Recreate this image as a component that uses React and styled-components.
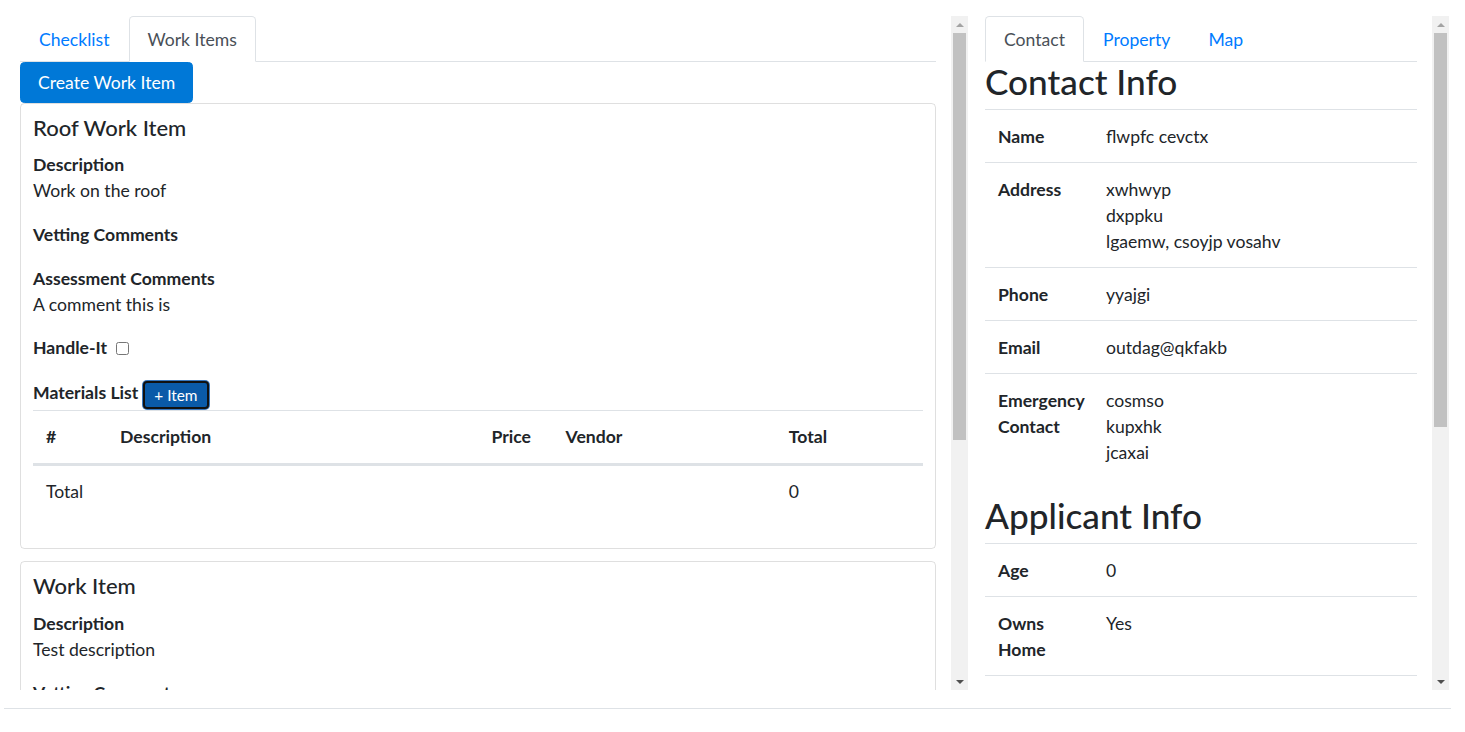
import React from "react";
import styled, { createGlobalStyle, css } from "styled-components";

const GlobalStyle = createGlobalStyle`
  html, body {
    margin: 0;
    padding: 0;
    background: #fff;
  }
  body {
    font-family: "Segoe UI", Lato, "Liberation Sans", sans-serif;
    font-size: 17.6px;
    line-height: 26px;
    color: #212529;
  }
  * {
    box-sizing: border-box;
  }
`;

const Page = styled.div`
  width: 1465px;
  padding: 16px 0 0 5px;
`;

const Columns = styled.div`
  display: flex;
  gap: 2px;
`;

const Pane = styled.div`
  display: flex;
  width: ${(p) => p.width}px;
  height: 674px;
`;

const PaneBody = styled.div`
  flex: 1;
  min-width: 0;
  padding: 0 15px;
  overflow: hidden;
`;

const ScrollTrack = styled.div`
  width: 17px;
  flex-shrink: 0;
  display: flex;
  flex-direction: column;
  background: #f1f1f1;
`;

const ScrollArrow = styled.div`
  height: 17px;
  display: flex;
  align-items: center;
  justify-content: center;

  &::before {
    content: "";
    border-left: 4px solid transparent;
    border-right: 4px solid transparent;
    ${(p) =>
      p.down
        ? css`
            border-top: 4px solid #505050;
          `
        : css`
            border-bottom: 4px solid #a3a3a3;
          `}
  }
`;

const ScrollThumb = styled.div`
  height: ${(p) => p.size}px;
  margin: 0 2px;
  background: #c1c1c1;
`;

const ScrollRest = styled.div`
  flex: 1;
`;

const Footer = styled.div`
  width: 1447px;
  margin: 18px 0 0 -1px;
  border-top: 1px solid #dee2e6;
`;

const NavTabs = styled.ul`
  display: flex;
  list-style: none;
  margin: 0;
  padding: 0;
  border-bottom: 1px solid #dee2e6;
`;

const Tab = styled.li`
  margin-bottom: -1px;
  padding: 10px 18px 8px;
  border: 1px solid transparent;
  border-radius: 4.4px 4.4px 0 0;
  color: #007bff;
  cursor: pointer;

  ${(p) =>
    p.active &&
    css`
      color: #495057;
      background: #fff;
      border-color: #dee2e6 #dee2e6 #fff;
    `}
`;

const PrimaryButton = styled.button`
  display: block;
  padding: 7px 17px 6px;
  font: inherit;
  color: #fff;
  background: #0078d7;
  border: 1px solid #0078d7;
  border-radius: 4.4px;
`;

const Card = styled.div`
  margin-bottom: 12px;
  padding: 11px 12px 13px;
  border: 1px solid rgba(0, 0, 0, 0.125);
  border-radius: 4.4px;
`;

const CardTitle = styled.h5`
  margin: 0 0 11px;
  font-size: 22px;
  font-weight: 500;
  line-height: 1.2;
`;

const Field = styled.div`
  margin-bottom: 17.6px;
`;

const Label = styled.div`
  font-weight: 700;
`;

const InlineLabel = styled.span`
  font-weight: 700;
`;

const Check = styled.input`
  width: 13px;
  height: 13px;
  margin: 0 0 0 9px;
  vertical-align: -1px;
`;

const MaterialsHeader = styled.div`
  display: flex;
  align-items: flex-start;
  height: 31px;
`;

const MaterialsLabel = styled.span`
  margin-top: 1px;
  font-weight: 700;
`;

const SmallButton = styled.button`
  height: 28px;
  margin: 2px 0 0 5px;
  padding: 0 9px;
  font: inherit;
  font-size: 15.4px;
  line-height: 22px;
  color: #fff;
  background: #0a5aa8;
  border: 2px solid #111;
  border-radius: 4px;
  box-shadow: 0 0 0 1px #3a78bd;
`;

const Table = styled.table`
  width: 100%;
  margin-bottom: 17.6px;
  border-collapse: separate;
  border-spacing: 0;
  table-layout: fixed;
`;

const HeadCell = styled.th`
  width: ${(p) => p.w}px;
  padding: 13px;
  text-align: left;
  vertical-align: bottom;
  font-weight: 700;
  border-top: 1px solid #dee2e6;
  border-bottom: 2px solid #dee2e6;
`;

const Cell = styled.td`
  padding: ${(p) => (p.info ? "14px 13px 12px" : "13px")};
  vertical-align: top;
  border-top: 1px solid #dee2e6;
`;

const RowLabel = styled.th`
  width: 108px;
  padding: 14px 13px 12px;
  text-align: left;
  vertical-align: top;
  font-weight: 700;
  border-top: 1px solid #dee2e6;
`;

const InfoRow = styled.tr`
  &:last-child > * {
    border-bottom: ${(p) => (p.closed ? "1px solid #dee2e6" : "0")};
  }
`;

const SectionHeading = styled.h2`
  margin: -2px 0 7px;
  font-size: 35.2px;
  font-weight: 500;
  line-height: 1.2;
`;

const Scrollbar = ({ thumb }) => (
  <ScrollTrack>
    <ScrollArrow />
    <ScrollThumb size={thumb} />
    <ScrollRest />
    <ScrollArrow down />
  </ScrollTrack>
);

const TextField = ({ label, value }) => (
  <Field>
    <Label>{label}</Label>
    {value && <div>{value}</div>}
  </Field>
);

const materialColumns = [
  ["#", 74],
  ["Description", 371],
  ["Price", 74],
  ["Vendor", 223],
  ["Total", 147],
];

const WorkItemCard = ({ item }) => (
  <Card>
    <CardTitle>{item.name}</CardTitle>
    <TextField label="Description" value={item.description} />
    <TextField label="Vetting Comments" value={item.vetting} />
    {item.full && (
      <>
        <TextField label="Assessment Comments" value={item.assessment} />
        <Field>
          <InlineLabel>Handle-It</InlineLabel>
          <Check type="checkbox" readOnly checked={false} />
        </Field>
        <MaterialsHeader>
          <MaterialsLabel>Materials List</MaterialsLabel>
          <SmallButton>+ Item</SmallButton>
        </MaterialsHeader>
        <Table>
          <thead>
            <tr>
              {materialColumns.map(([title, w]) => (
                <HeadCell key={title} w={w}>
                  {title}
                </HeadCell>
              ))}
            </tr>
          </thead>
          <tbody>
            <tr>
              <Cell colSpan={4}>Total</Cell>
              <Cell>0</Cell>
            </tr>
          </tbody>
        </Table>
      </>
    )}
  </Card>
);

const workItems = [
  {
    name: "Roof Work Item",
    description: "Work on the roof",
    vetting: "",
    assessment: "A comment this is",
    full: true,
  },
  {
    name: "Work Item",
    description: "Test description",
    vetting: "",
    full: false,
  },
];

const InfoTable = ({ rows, closed }) => (
  <Table>
    <tbody>
      {rows.map(([label, lines]) => (
        <InfoRow key={label} closed={closed}>
          <RowLabel>{label}</RowLabel>
          <Cell info>
            {lines.map((line) => (
              <div key={line}>{line}</div>
            ))}
          </Cell>
        </InfoRow>
      ))}
    </tbody>
  </Table>
);

const contactRows = [
  ["Name", ["flwpfc cevctx"]],
  ["Address", ["xwhwyp", "dxppku", "lgaemw, csoyjp vosahv"]],
  ["Phone", ["yyajgi"]],
  ["Email", ["outdag@qkfakb"]],
  ["Emergency Contact", ["cosmso", "kupxhk", "jcaxai"]],
];

const applicantRows = [
  ["Age", ["0"]],
  ["Owns Home", ["Yes"]],
];

export default function App() {
  return (
    <>
      <GlobalStyle />
      <Page>
        <Columns>
          <Pane width={963}>
            <PaneBody>
              <NavTabs>
                <Tab>Checklist</Tab>
                <Tab active>Work Items</Tab>
              </NavTabs>
              <PrimaryButton>Create Work Item</PrimaryButton>
              {workItems.map((item) => (
                <WorkItemCard key={item.name} item={item} />
              ))}
            </PaneBody>
            <Scrollbar thumb={407} />
          </Pane>
          <Pane width={479}>
            <PaneBody>
              <NavTabs>
                <Tab active>Contact</Tab>
                <Tab>Property</Tab>
                <Tab>Map</Tab>
              </NavTabs>
              <SectionHeading>Contact Info</SectionHeading>
              <InfoTable rows={contactRows} />
              <SectionHeading>Applicant Info</SectionHeading>
              <InfoTable rows={applicantRows} closed />
            </PaneBody>
            <Scrollbar thumb={394} />
          </Pane>
        </Columns>
        <Footer />
      </Page>
    </>
  );
}
